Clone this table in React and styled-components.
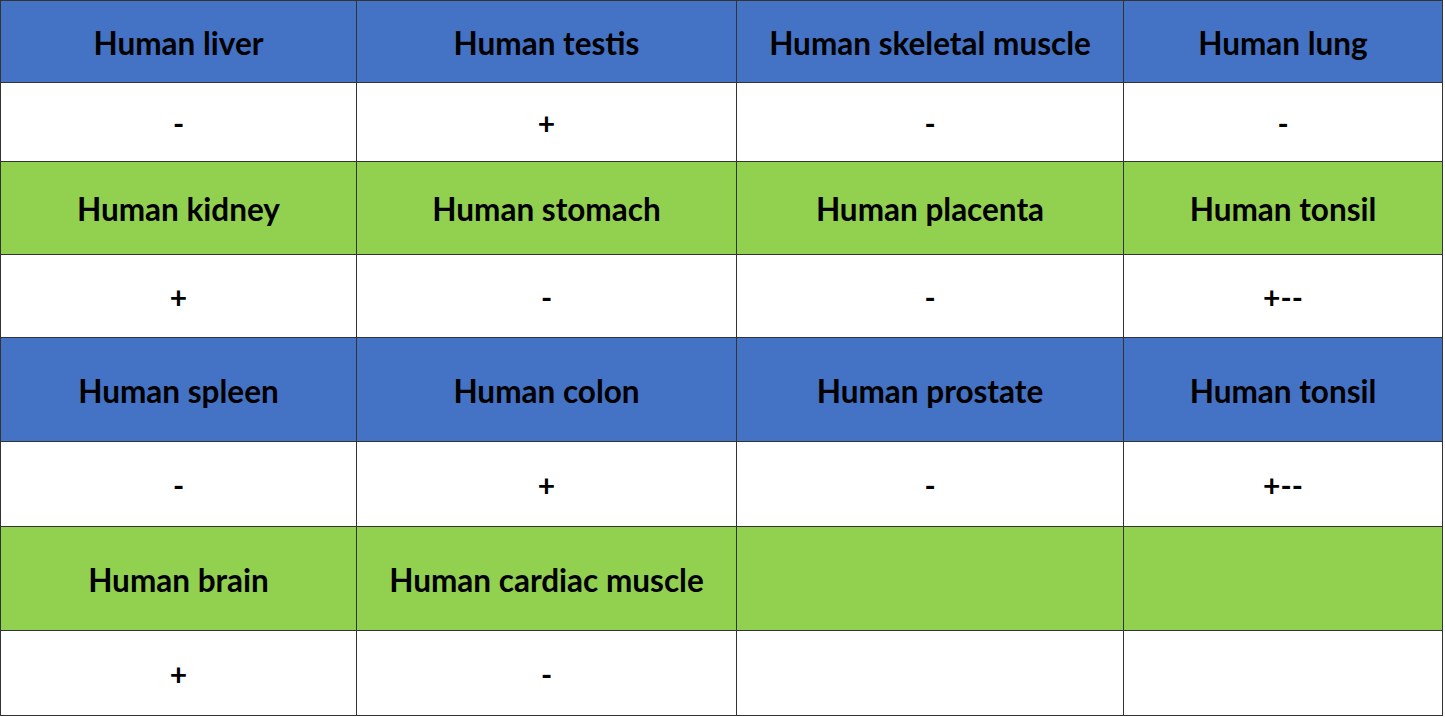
import React from "react"
import styled, { createGlobalStyle } from "styled-components"

const Global = createGlobalStyle`
  html, body {
    margin: 0;
    padding: 0;
    background: #ffffff;
  }
`

const rows = [
  { tone: "blue", height: 81, cells: ["Human liver", "Human testis", "Human skeletal muscle", "Human lung"] },
  { tone: "white", height: 78, cells: ["-", "+", "-", "-"] },
  { tone: "green", height: 92, cells: ["Human kidney", "Human stomach", "Human placenta", "Human tonsil"] },
  { tone: "white", height: 82, cells: ["+", "-", "-", "+--"] },
  { tone: "blue", height: 103, cells: ["Human spleen", "Human colon", "Human prostate", "Human tonsil"] },
  { tone: "white", height: 84, cells: ["-", "+", "-", "+--"] },
  { tone: "green", height: 103, cells: ["Human brain", "Human cardiac muscle", "", ""] },
  { tone: "white", height: 84, cells: ["+", "-", "", ""] },
]

const fills = {
  blue: "#4472c4",
  green: "#92d050",
  white: "#ffffff",
}

const Grid = styled.div`
  display: grid;
  grid-template-columns: 355px 379px 386px 318px;
  grid-template-rows: ${(p) => p.$rows};
  gap: 1px;
  width: max-content;
  background: #333333;
  border: 1px solid #333333;
  font-family: Lato, "Open Sans", "Liberation Sans", sans-serif;
`

const Cell = styled.div`
  display: flex;
  align-items: center;
  justify-content: center;
  padding-top: 2px;
  box-sizing: border-box;
  background: ${(p) => fills[p.$tone]};
  color: #000000;
  font-weight: 700;
  font-size: ${(p) => (p.$tone === "white" ? "30px" : "31.5px")};
  white-space: nowrap;
`

const App = () => {
  return (
    <>
      <Global />
      <Grid $rows={rows.map((r) => `${r.height}px`).join(" ")}>
        {rows.map((row, i) =>
          row.cells.map((text, j) => (
            <Cell key={`${i}-${j}`} $tone={row.tone}>
              {text}
            </Cell>
          ))
        )}
      </Grid>
    </>
  )
}

export default App
